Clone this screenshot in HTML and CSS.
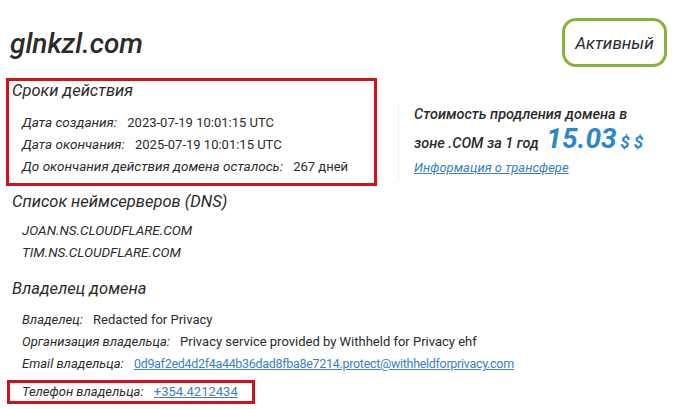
FILE: index.html
```html
<!DOCTYPE html>
<html lang="ru">
<head>
  <meta charset="UTF-8">
  <meta name="viewport" content="width=device-width, initial-scale=1.0">
  <title>glnkzl.com</title>
  <link rel="stylesheet" href="styles.css">
</head>
<body>
  <header class="head">
    <h1 class="domain">glnkzl.com</h1>
    <span class="status">Активный</span>
  </header>

  <div class="top">
    <section class="block block-marked">
      <h2 class="block-title">Сроки действия</h2>
      <div class="row"><span class="label">Дата создания:</span> <span class="value">2023-07-19 10:01:15 UTC</span></div>
      <div class="row"><span class="label">Дата окончания:</span> <span class="value">2025-07-19 10:01:15 UTC</span></div>
      <div class="row"><span class="label">До окончания действия домена осталось:</span> <span class="value">267 дней</span></div>
    </section>

    <aside class="price">
      <p class="price-text">Стоимость продления домена в зоне .COM за 1 год <span class="price-num">15.03</span> <span class="price-cur">$ $</span></p>
      <a href="#" class="price-link">Информация о трансфере</a>
    </aside>
  </div>

  <section class="block block-dns">
    <h2 class="block-title">Список неймсерверов (DNS)</h2>
    <div class="row ns">JOAN.NS.CLOUDFLARE.COM</div>
    <div class="row ns">TIM.NS.CLOUDFLARE.COM</div>
  </section>

  <section class="block block-owner">
    <h2 class="block-title">Владелец домена</h2>
    <div class="row"><span class="label">Владелец:</span> <span class="value">Redacted for Privacy</span></div>
    <div class="row"><span class="label">Организация владельца:</span> <span class="value">Privacy service provided by Withheld for Privacy ehf</span></div>
    <div class="row"><span class="label">Email владельца:</span> <a href="#" class="value link link-email">0d9af2ed4d2f4a44b36dad8fba8e7214.protect@withheldforprivacy.com</a></div>
    <div class="row row-marked"><span class="label">Телефон владельца:</span> <a href="#" class="value link">+354.4212434</a></div>
  </section>
</body>
</html>
```

FILE: styles.css
```css
body {
  margin: 0;
  background: #fff;
  color: #2b2b2b;
  font-family: Roboto, "Open Sans", sans-serif;
}
.head {
  display: flex;
  justify-content: space-between;
  align-items: flex-start;
  padding: 18px 20px 0 10px;
  height: 60px;
}
.domain {
  margin: 11px 0 0;
  font-size: 28px;
  font-weight: 500;
  font-style: italic;
  line-height: 30px;
}
.status {
  width: 99px;
  height: 43px;
  border: 3px solid #8bb13a;
  border-radius: 14px;
  display: flex;
  align-items: center;
  justify-content: center;
  font-size: 17px;
  font-style: italic;
}
.top {
  display: flex;
  align-items: flex-start;
}
.block {
  padding: 0 8px 0 12px;
}
.block-marked {
  width: 362px;
  height: 101px;
  margin-left: 6px;
  padding: 0 0 1px 3px;
  border: 3px solid #d0111b;
}
.block-title {
  margin: 0;
  font-size: 16.5px;
  font-weight: 400;
  font-style: italic;
  line-height: 20px;
}
.row {
  font-size: 13px;
  line-height: 22px;
  padding-left: 10px;
}
.block-title + .row {
  margin-top: 11px;
}
.label {
  font-style: italic;
  margin-right: 7px;
}
.block-marked .label {
  font-size: 13.5px;
  line-height: 18px;
}
.block-dns {
  margin-top: 6px;
}
.block-dns .block-title + .row {
  margin-top: 7px;
}
.ns {
  font-size: 13.5px;
  font-style: italic;
}
.block-owner {
  margin-top: 16px;
}
.block-owner .block-title + .row {
  margin-top: 10px;
}
.link {
  color: #3b80c3;
}
.link-email {
  font-size: 12.5px;
  letter-spacing: -0.3px;
}
.row-marked {
  width: max-content;
  margin: 5px 0 0 -5px;
  padding: 0 14px 0 12px;
  border: 3px solid #d0111b;
  line-height: 18px;
}
.price {
  margin: 25px 0 0 21px;
  padding: 0 0 6px 15px;
  border-left: 1px solid #f0f0f0;
  width: 232px;
}
.price-text {
  margin: 0;
  font-size: 14.5px;
  font-style: italic;
  font-weight: 500;
  line-height: 24px;
}
.price-num {
  margin-left: 4px;
  color: #2a88c8;
  font-size: 28px;
  font-weight: 700;
}
.price-cur {
  color: #2a88c8;
  font-size: 17px;
  font-weight: 700;
}
.price-link {
  display: block;
  margin-top: 4px;
  font-size: 13px;
  font-style: italic;
  color: #3b80c3;
}
```
